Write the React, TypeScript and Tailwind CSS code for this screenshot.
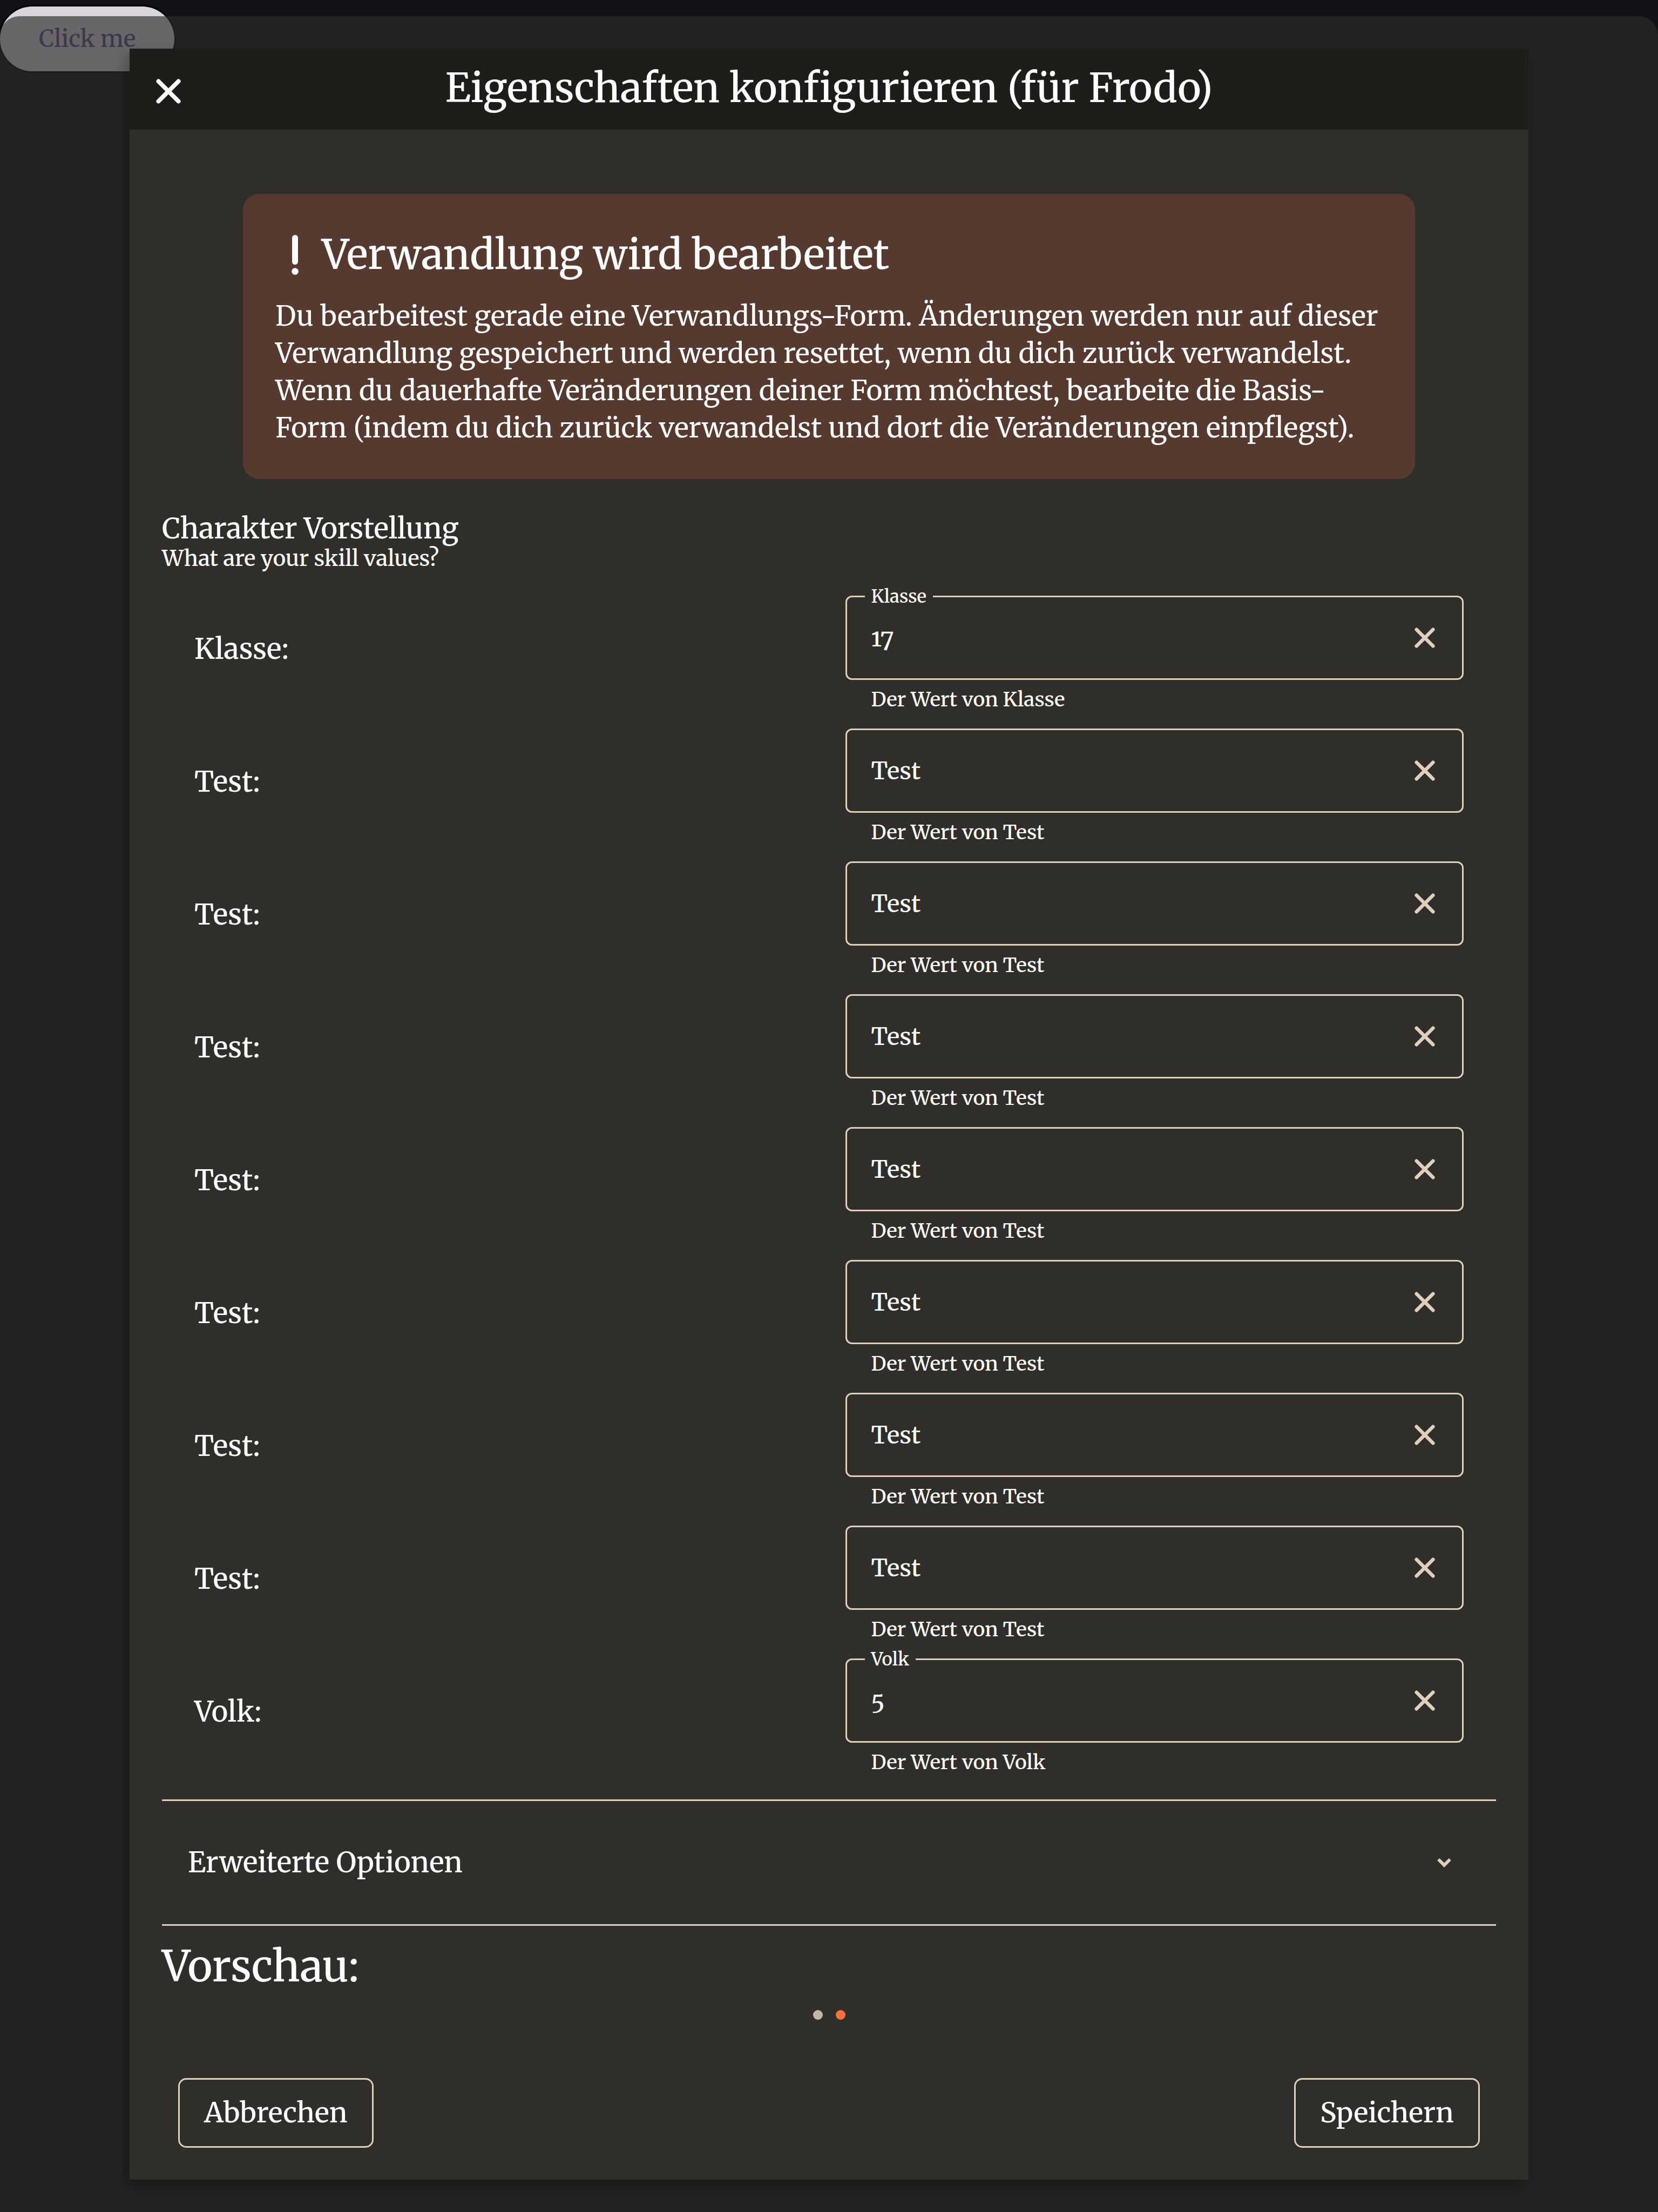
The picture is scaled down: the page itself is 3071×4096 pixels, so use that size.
import { useState } from "react";

type Skill = { id: string; name: string; value: string };

const SKILLS: Skill[] = [
  { id: "klasse", name: "Klasse", value: "17" },
  { id: "test-1", name: "Test", value: "" },
  { id: "test-2", name: "Test", value: "" },
  { id: "test-3", name: "Test", value: "" },
  { id: "test-4", name: "Test", value: "" },
  { id: "test-5", name: "Test", value: "" },
  { id: "test-6", name: "Test", value: "" },
  { id: "test-7", name: "Test", value: "" },
  { id: "volk", name: "Volk", value: "5" },
];

function CrossIcon({ className, strokeWidth }: { className: string; strokeWidth: number }) {
  return (
    <svg viewBox="0 0 46 46" className={className} fill="none" stroke="currentColor" strokeWidth={strokeWidth} strokeLinecap="round" aria-hidden="true">
      <path d="M4.5 4.5 41.5 41.5M41.5 4.5 4.5 41.5" />
    </svg>
  );
}

function ExclamationIcon() {
  return (
    <svg viewBox="0 0 72 74" className="h-[74px] w-[72px] shrink-0" fill="currentColor" aria-hidden="true">
      <rect x="31" y="0" width="11" height="55" rx="5.5" />
      <circle cx="36.5" cy="67.5" r="6.3" />
    </svg>
  );
}

function SkillRow({ skill }: { skill: Skill }) {
  const [value, setValue] = useState(skill.value);
  return (
    <div className="grid grid-cols-2 items-center gap-x-[60px]">
      <label htmlFor={skill.id} className="pb-4 text-[52px] leading-[60px]">
        {skill.name}:
      </label>
      <div>
        <div className="relative flex h-[156px] items-center rounded-xl border-3 border-[#dfcfbd] pr-[33px] pl-[45px]">
          {value !== "" && (
            <label htmlFor={skill.id} className="absolute -top-[22px] left-[33px] bg-[#2f2e2a] px-3 text-[33px] leading-[42px]">
              {skill.name}
            </label>
          )}
          <input
            id={skill.id}
            type="text"
            value={value}
            placeholder={skill.name}
            aria-describedby={`${skill.id}-help`}
            onChange={(e) => setValue(e.target.value)}
            className="h-full min-w-0 flex-1 bg-transparent text-[44px] oldstyle-nums outline-none placeholder:text-white"
          />
          <button type="button" aria-label={`${skill.name} leeren`} onClick={() => setValue("")} className="flex size-[72px] items-center justify-center text-[#dfcfbd]">
            <CrossIcon className="size-[38px]" strokeWidth={8} />
          </button>
        </div>
        <p id={`${skill.id}-help`} className="mt-[15px] pl-12 text-[37px] leading-[42px]">
          Der Wert von {skill.name}
        </p>
      </div>
    </div>
  );
}

export default function App() {
  return (
    <div className="relative flex min-h-screen flex-col bg-[#131016] font-['Merriweather','Noto_Serif','DejaVu_Serif',serif] font-medium text-white">
      <button type="button" className="absolute top-3 left-0 h-[120px] rounded-full bg-[#d9d4de] px-[72px] text-[43px] text-[#5d5188] shadow-[0_0_0_3px_#000]">
        Click me
      </button>

      <div className="relative mt-[30px] flex-1 rounded-t-[36px] bg-[#2d2d2b]/66 px-[240px] py-[60px]">
        <div role="dialog" aria-labelledby="dialog-title" className="bg-[#2f2e2a] shadow-[-6px_12px_24px_rgba(0,0,0,0.3)]">
          <header className="grid h-[150px] grid-cols-[72px_1fr_72px] items-center bg-[#1e1d1a] px-9">
            <button type="button" aria-label="Schließen" className="flex justify-center pt-2">
              <CrossIcon className="size-[46px]" strokeWidth={8} />
            </button>
            <h1 id="dialog-title" className="pb-1 text-center text-[74px] leading-[90px]">
              Eigenschaften konfigurieren (für Frodo)
            </h1>
          </header>

          <main className="px-[60px] pt-[119px]">
            <section className="mx-[150px] rounded-[30px] bg-[#563a2f] px-[60px] pt-[63px] pb-[60px]">
              <h2 className="mb-[30px] flex items-center gap-[14px] text-[75px] leading-[99px]">
                <ExclamationIcon />
                Verwandlung wird bearbeitet
              </h2>
              <p className="text-[51px] leading-[69px] font-normal">
                Du bearbeitest gerade eine Verwandlungs-Form. Änderungen werden nur auf dieser Verwandlung gespeichert und werden resettet, wenn du dich zurück verwandelst. Wenn du dauerhafte Veränderungen deiner Form möchtest, bearbeite die Basis-Form (indem du dich zurück verwandelst und dort die Veränderungen einpflegst).
              </p>
            </section>

            <section className="mt-[63px]">
              <h3 className="text-[52px] leading-[57px]">Charakter Vorstellung</h3>
              <p className="text-[40px] leading-[54px]">What are your skill values?</p>
              <div className="mx-[60px] mt-[42px] mb-12 flex flex-col gap-[33px]">
                {SKILLS.map((skill) => (
                  <SkillRow key={skill.id} skill={skill} />
                ))}
              </div>
            </section>

            <button type="button" aria-expanded="false" className="flex h-[234px] w-full items-center justify-between border-y-3 border-[#dfcfbd] pr-[60px] pl-12 text-[52px]">
              Erweiterte Optionen
              <svg viewBox="0 0 24 24" className="size-[72px] text-[#dfcfbd]" fill="currentColor" aria-hidden="true">
                <path d="M9.1 9.3 12 12.2l2.9-2.9 1.4 1.4-4.3 4.3-4.3-4.3z" />
              </svg>
            </button>

            <h2 className="mt-[30px] text-[78px] leading-[90px]">Vorschau:</h2>
            <div className="mt-9 flex justify-center gap-6">
              <span className="size-[18px] rounded-full bg-[#c4b5a4]" />
              <span className="size-[18px] rounded-full bg-[#ff6f3d]" />
            </div>
          </main>

          <footer className="flex justify-between px-[90px] pt-[108px] pb-[59px]">
            <button type="button" className="h-[129px] rounded-[15px] border-3 border-[#dfcfbd] px-[45px] text-[51px]">
              Abbrechen
            </button>
            <button type="button" className="h-[129px] rounded-[15px] border-3 border-[#dfcfbd] px-[45px] text-[51px]">
              Speichern
            </button>
          </footer>
        </div>
      </div>
    </div>
  );
}
